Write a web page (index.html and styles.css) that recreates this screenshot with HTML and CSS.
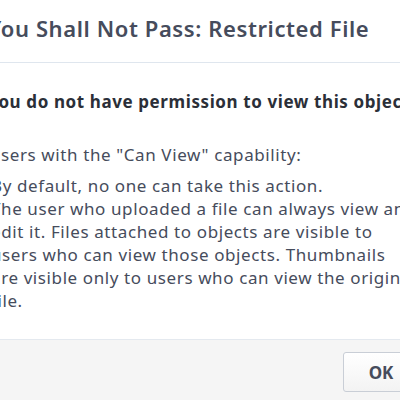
FILE: index.html
```html
<!DOCTYPE html>
<html>
<head>
<meta charset="utf-8">
<link rel="stylesheet" href="styles.css">
</head>
<body>
<div class="dialog">
  <div class="dialog-header">
    <h1 class="dialog-title">You Shall Not Pass: Restricted File</h1>
  </div>
  <div class="dialog-body">
    <p class="lead">You do not have permission to view this object.</p>
    <p class="cap-title">Users with the "Can View" capability:</p>
    <ul class="cap-list">
      <li>By default, no one can take this action.</li>
      <li>The user who uploaded a file can always view and<br>edit it. Files attached to objects are visible to<br>users who can view those objects. Thumbnails<br>are visible only to users who can view the original<br>file.</li>
    </ul>
  </div>
  <div class="dialog-footer">
    <button class="btn">OK</button>
  </div>
</div>
</body>
</html>
```
FILE: styles.css
```css
html, body {
  margin: 0;
  padding: 0;
  overflow: hidden;
  background: #ffffff;
}
body {
  font-family: "Noto Sans", "Open Sans", sans-serif;
  color: #464c5c;
}
.dialog {
  margin-left: -12px;
  width: 480px;
  white-space: nowrap;
}
.dialog-header {
  height: 63px;
  box-sizing: border-box;
  padding-top: 15px;
  border-bottom: 1px solid #dfe6ee;
}
.dialog-title {
  margin: 0;
  font-size: 22px;
  line-height: 26px;
  letter-spacing: 0.6px;
  font-weight: 600;
  color: #464c5c;
}
.dialog-body {
  padding: 27px 0 27px 0;
  font-size: 17px;
  line-height: 23px;
  letter-spacing: 0.6px;
}
.lead {
  margin: 0 0 30px 0;
  font-weight: 700;
  font-size: 17px;
  color: #2b2f38;
}
.cap-title {
  margin: 0 0 8px 0;
}
.cap-list {
  margin: 0;
  padding: 0 0 0 3px;
  list-style: none;
}
.dialog-footer {
  background: #f5f5f5;
  border-top: 1px solid #e4e9ef;
  padding: 12px 0 20px 355px;
  height: 80px;
}
.btn {
  font-family: "Noto Sans", "Open Sans", sans-serif;
  font-size: 17px;
  font-weight: 700;
  color: #464c5c;
  height: 40px;
  width: 76px;
  background: linear-gradient(#ffffff, #f3f3f3);
  border: 1px solid #c9ced6;
  border-radius: 3px;
  padding: 0;
}
```
